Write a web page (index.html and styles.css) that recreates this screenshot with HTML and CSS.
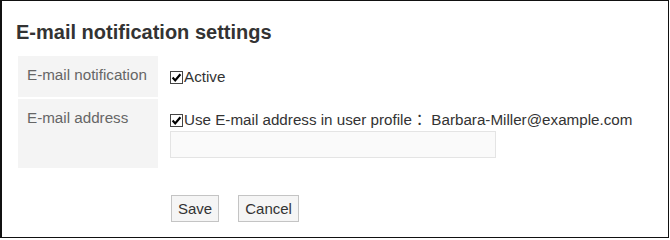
FILE: index.html
```html
<!DOCTYPE html>
<html lang="en">
<head>
<meta charset="utf-8">
<title>E-mail notification settings</title>
<link rel="stylesheet" href="styles.css">
</head>
<body>
<div class="frame">
  <h1 class="title">E-mail notification settings</h1>
  <div class="form-grid">
    <div class="label">E-mail notification</div>
    <div class="value">
      <label class="check"><span class="box"><svg width="13" height="13" viewBox="0 0 13 13"><rect x="0.5" y="0.5" width="12" height="12" fill="#fff" stroke="#444"/><path d="M2.6 6.6 L5.2 9.4 L10.4 3.2" fill="none" stroke="#000" stroke-width="2.2" stroke-linecap="butt" stroke-linejoin="miter"/></svg></span>Active</label>
    </div>
    <div class="label">E-mail address</div>
    <div class="value">
      <label class="check"><span class="box"><svg width="13" height="13" viewBox="0 0 13 13"><rect x="0.5" y="0.5" width="12" height="12" fill="#fff" stroke="#444"/><path d="M2.6 6.6 L5.2 9.4 L10.4 3.2" fill="none" stroke="#000" stroke-width="2.2" stroke-linecap="butt" stroke-linejoin="miter"/></svg></span>Use E-mail address in user profile：&nbsp;Barbara-Miller@example.com</label>
      <input class="text-input" type="text" disabled>
    </div>
  </div>
  <div class="actions">
    <button class="btn" type="button">Save</button>
    <button class="btn" type="button">Cancel</button>
  </div>
</div>
</body>
</html>
```

FILE: styles.css
```css
html, body {
  margin: 0;
  padding: 0;
  background: #fff;
}

.frame {
  box-sizing: border-box;
  width: 669px;
  height: 238px;
  border: 1px solid #111;
  border-left-width: 2px;
  padding: 0 16px;
  font-family: "Liberation Sans", Arial, "Noto Sans CJK JP", sans-serif;
  color: #333;
}

.title {
  margin: 20px 0 12px -2px;
  font-size: 20px;
  font-weight: bold;
  line-height: 23px;
  color: #333;
}

.form-grid {
  display: grid;
  grid-template-columns: 140px 1fr;
  row-gap: 2px;
}

.label {
  background: #f4f4f4;
  padding: 8px 9px;
  font-size: 15.2px;
  line-height: 21px;
  color: #666;
}

.value {
  padding: 10px 12px;
  font-size: 15.2px;
  line-height: 21px;
  color: #333;
}

.check {
  display: block;
  white-space: nowrap;
}

.box {
  display: inline-block;
  width: 13px;
  height: 13px;
  vertical-align: -2px;
  margin-right: 1px;
}

.box svg {
  display: block;
}

.text-input {
  display: block;
  box-sizing: border-box;
  width: 326px;
  height: 27px;
  margin: 1px 0 0;
  border: 1px solid #e4e4e4;
  background: #fafafa;
  padding: 0 6px;
}

.actions {
  display: flex;
  gap: 19px;
  margin: 27px 0 0 153px;
}

.btn {
  box-sizing: border-box;
  height: 27px;
  padding: 0 6px;
  border: 1px solid #c4c4c4;
  background: #f5f5f5;
  font-family: "Liberation Sans", Arial, sans-serif;
  font-size: 15px;
  color: #333;
  border-radius: 0;
}
```
